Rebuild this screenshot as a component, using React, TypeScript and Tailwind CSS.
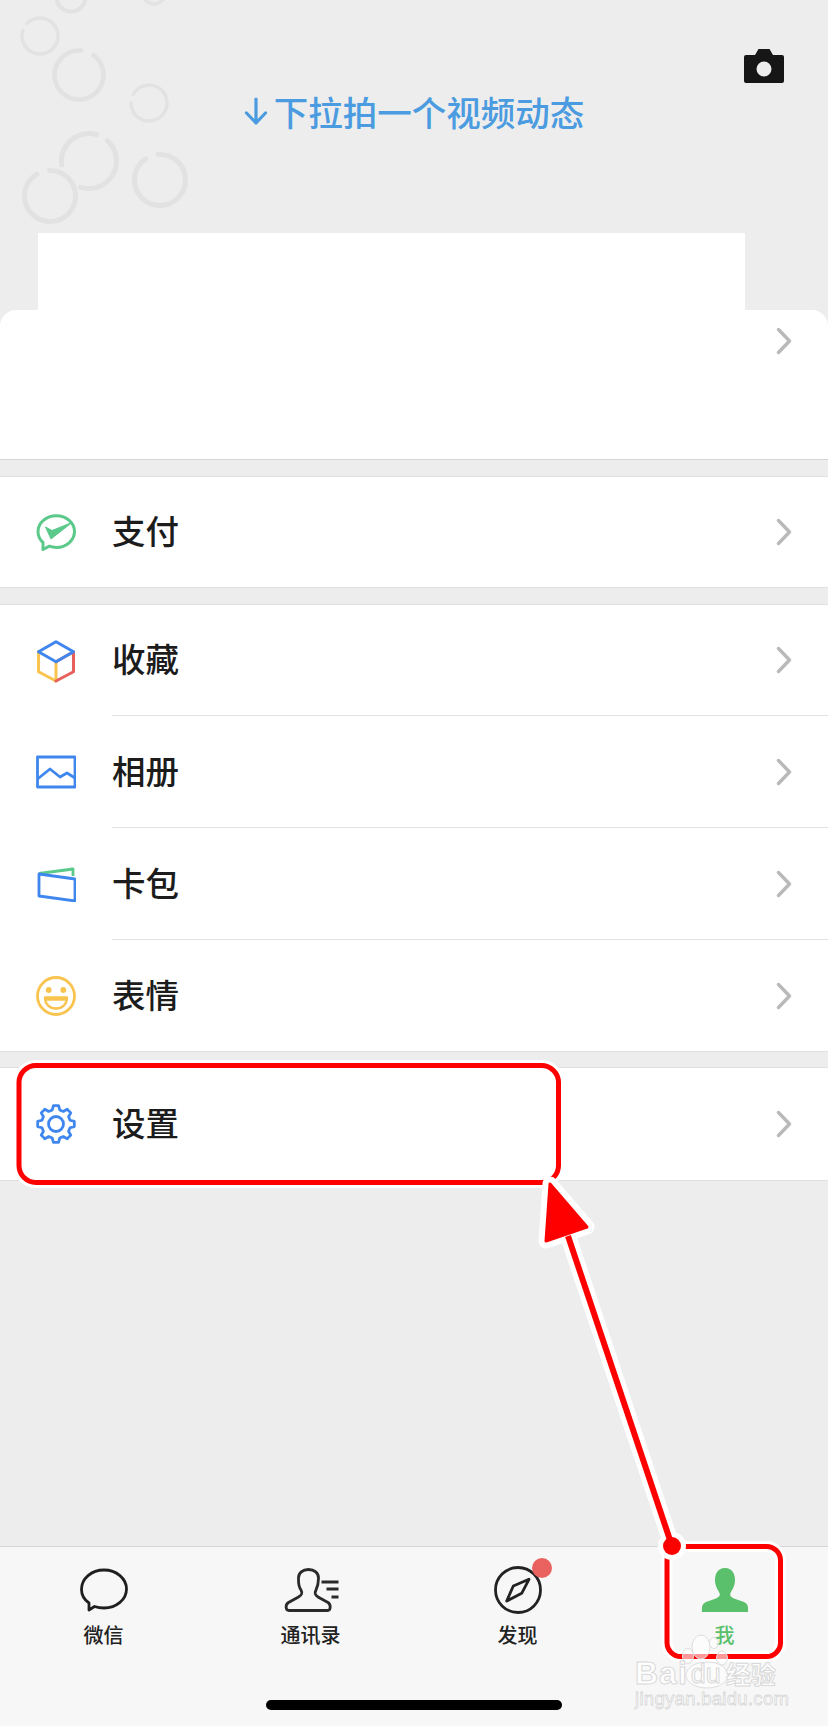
import React from "react";

const cjk = "font-['Noto_Sans_CJK_SC','Noto_Sans',sans-serif]";

function Chevron() {
  return (
    <svg width="18" height="30" viewBox="0 0 18 30" fill="none" className="shrink-0">
      <path d="M3.500 3.500 L14.500 15 L3.500 26.500" stroke="#b9b9b9" strokeWidth="3.400" strokeLinecap="round" strokeLinejoin="round" />
    </svg>
  );
}

function PayIcon() {
  return (
    <svg width="40" height="40" viewBox="0 0 40 40" fill="none">
      <path d="M7 30.500 C3.500 27.500 2 24 2 19.600 C2 10.800 10.200 3.800 20.300 3.800 C30.400 3.800 38.500 10.800 38.500 19.600 C38.500 28.400 30.400 35.400 20.300 35.400 C17.800 35.400 15.500 35 13.400 34.200 L7 37.500 Z" stroke="#5ac98a" strokeWidth="3" strokeLinejoin="round" />
      <path d="M9.500 15 L16 18.500 L36 10.500 L15 27 Z" fill="#5ac98a" stroke="#5ac98a" strokeWidth="1" strokeLinejoin="round" />
    </svg>
  );
}

function BoxIcon() {
  return (
    <svg width="40" height="44" viewBox="0 0 40 44" fill="none" strokeWidth="3" strokeLinejoin="round" strokeLinecap="round">
      <path d="M2.500 32.700 L2.500 12.700 M2.500 32.700 L20 42 L20 22.700" stroke="#f8c44f" />
      <path d="M37.500 12.700 L37.500 32.700 L20 42 M37.500 12.700 L20 22.700" stroke="#e8605c" />
      <path d="M2.500 12.700 L20 2.700 L37.500 12.700 L20 22.700 Z" stroke="#3f87ee" />
    </svg>
  );
}

function AlbumIcon() {
  return (
    <svg width="40" height="34" viewBox="0 0 40 34" fill="none" stroke="#3f87ee" strokeWidth="2.800" strokeLinejoin="round">
      <rect x="1.500" y="2" width="37.500" height="30" />
      <path d="M1.500 24 L14 14 L24 22 L31 18 L39 23" />
    </svg>
  );
}

function CardIcon() {
  return (
    <svg width="40" height="36" viewBox="0 0 40 36" fill="none" strokeWidth="2.800" strokeLinejoin="round">
      <path d="M3 7.500 L37 3 L37 10" stroke="#5ac98a" />
      <path d="M3 8 L39 13 L39 35 L3 30 Z" stroke="#3f87ee" />
    </svg>
  );
}

function SmileIcon() {
  return (
    <svg width="40" height="40" viewBox="0 0 40 40" fill="none">
      <circle cx="20" cy="20" r="18.500" stroke="#f8c44f" strokeWidth="2.800" />
      <circle cx="12.700" cy="14" r="2.900" fill="#f8c44f" />
      <circle cx="27.300" cy="14" r="2.900" fill="#f8c44f" />
      <path d="M9 21.500 H31 C31 28.500 26 32.500 20 32.500 C14 32.500 9 28.500 9 21.500 Z M9.500 23.500 H30.500" stroke="#f8c44f" strokeWidth="2.400" strokeLinejoin="round" />
    </svg>
  );
}

function gearPath() {
  const pts: string[] = [];
  for (let i = 0; i < 8; i++) {
    const a = (i * 45 * Math.PI) / 180;
    const steps: [number, number][] = [
      [-15, 14.5],
      [-8, 18.5],
      [8, 18.5],
      [15, 14.5],
    ];
    for (const [off, r] of steps) {
      const t = a + (off * Math.PI) / 180;
      pts.push(`${(20 + r * Math.sin(t)).toFixed(2)} ${(20 - r * Math.cos(t)).toFixed(2)}`);
    }
  }
  return "M" + pts.join(" L") + " Z";
}

function GearIcon() {
  return (
    <svg width="40" height="40" viewBox="0 0 40 40" fill="none" stroke="#3f87ee" strokeWidth="2.800" strokeLinejoin="round">
      <circle cx="20" cy="20" r="7.500" />
      <path d={gearPath()} />
    </svg>
  );
}

function ChatIcon() {
  return (
    <svg width="48" height="44" viewBox="0 0 48 44" fill="none">
      <path d="M9 35 C4 31.500 1.500 27 1.500 21.500 C1.500 10.500 11.500 2 24 2 C36.500 2 46.500 10.500 46.500 21 C46.500 31.500 36.500 40 24 40 C20.500 40 17.500 39.500 14.500 38.500 L9 42 Z" stroke="#1f1f1f" strokeWidth="2.800" strokeLinejoin="round" />
    </svg>
  );
}

function ContactsIcon() {
  return (
    <svg width="56" height="44" viewBox="0 0 56 44" fill="none" stroke="#2a2a2a" strokeWidth="2.800" strokeLinejoin="round">
      <path d="M18 22 C15 18 15.500 13 15.500 10 C15.500 5 19.500 1.500 25.500 1.500 C31.500 1.500 35.500 5 35.500 10 C35.500 13 35 18 33 22 C31.500 25 31.500 27 35 29 L45 34.500 C48 36.500 48 42.500 44.500 42.500 H6 C2.500 42.500 2 36.500 5.500 34.500 L15.500 29 C19.500 27 19.500 25 18 22 Z" />
      <path d="M38.500 14 H55.500 M43.500 21 H55.500 M48.500 29 H55.500" strokeWidth="3" />
    </svg>
  );
}

function CompassIcon() {
  return (
    <svg width="48" height="48" viewBox="0 0 48 48" fill="none">
      <circle cx="24" cy="24" r="22.500" stroke="#222" strokeWidth="2.800" />
      <path d="M35 13.300 L27.700 27.300 L12.700 35 L19.300 20 Z" stroke="#222" strokeWidth="2.800" strokeLinejoin="round" />
    </svg>
  );
}

function MeIcon() {
  return (
    <svg width="48" height="44" viewBox="0 0 48 44" fill="#5ac06c">
      <path d="M24 0 C32 0 34 7 34 12 C34 18 31 22 29.500 25 C28.500 27.500 30 29 33 30.500 L43 34 C46.500 35.500 47.500 38.500 47 44 H1 C0.500 38.500 1.500 35.500 5 34 L15 30.500 C18 29 19.500 27.500 18.500 25 C17 22 14 18 14 12 C14 7 16 0 24 0 Z" />
    </svg>
  );
}

function MenuRow({ icon, label, divider = false, h = "h-[112px]" }: { icon: React.ReactNode; label: string; divider?: boolean; h?: string }) {
  return (
    <div className={`flex items-stretch ${h}`}>
      <div className="w-[112px] shrink-0 flex items-center">
        <div className="w-[40px] ml-[36px] flex items-center justify-center">{icon}</div>
      </div>
      <div className={`flex-1 flex items-center justify-between pr-[35px] ${divider ? "border-b border-[#e3e3e3]" : ""}`}>
        <span className="mb-[4px] text-[33.500px] leading-none font-medium text-[#1c1c1c]">{label}</span>
        <Chevron />
      </div>
    </div>
  );
}

function Tab({ icon, label, active = false }: { icon: React.ReactNode; label: string; active?: boolean }) {
  return (
    <div className="flex flex-col items-center">
      <div className="h-[48px] flex items-center justify-center relative">{icon}</div>
      <span className={`mt-[7px] text-[20px] leading-[28px] font-medium ${active ? "text-[#5ac06c]" : "text-[#222222]"}`}>{label}</span>
    </div>
  );
}

function Arc({ cx, cy, r, start, sweep, w }: { cx: number; cy: number; r: number; start: number; sweep: number; w: number }) {
  return (
    <circle
      cx={cx}
      cy={cy}
      r={r}
      pathLength={360}
      strokeWidth={w}
      strokeDasharray={`${sweep} ${360 - sweep}`}
      transform={`rotate(${start} ${cx} ${cy})`}
    />
  );
}

function Bubbles() {
  return (
    <svg width="200" height="230" viewBox="0 0 200 230" fill="none" className="absolute left-0 top-0" stroke="#e2e2e2" strokeLinecap="round">
      <circle cx="71" cy="-3" r="14.500" strokeWidth="4" />
      <circle cx="154" cy="-7" r="11" strokeWidth="3.500" />
      <Arc cx={40} cy={36} r={18} start={-135} sweep={333} w={3.5} />
      <Arc cx={79} cy={75} r={24.5} start={-54} sweep={329} w={4.6} />
      <Arc cx={149} cy={103} r={18} start={-151} sweep={331} w={3.5} />
      <Arc cx={89} cy={161} r={27.5} start={-48} sweep={156} w={5} />
      <Arc cx={89} cy={161} r={27.5} start={172} sweep={114} w={5} />
      <Arc cx={50} cy={196} r={25.5} start={-91} sweep={330} w={5} />
      <Arc cx={160} cy={180} r={25.5} start={-94} sweep={330} w={5} />
    </svg>
  );
}

function Annotations() {
  return (
    <svg width="828" height="1726" viewBox="0 0 828 1726" fill="none" className="absolute left-0 top-0 pointer-events-none">
      <rect x="19" y="1065.500" width="539.500" height="117" rx="17" stroke="#fff" strokeWidth="11" />
      <rect x="667" y="1546.500" width="113.500" height="110" rx="14" stroke="#fff" strokeWidth="11" />
      <rect x="19" y="1065.500" width="539.500" height="117" rx="17" stroke="#f00" strokeWidth="5" />
      <rect x="667" y="1546.500" width="113.500" height="110" rx="14" stroke="#f00" strokeWidth="5" />
      <path d="M672 1546 L568 1236" stroke="#fff" strokeWidth="16" />
      <path d="M550 1184 L587 1227 L546 1241 Z" fill="#fff" stroke="#fff" strokeWidth="15" strokeLinejoin="round" />
      <circle cx="672" cy="1546" r="14" fill="#fff" />
      <path d="M672 1546 L568 1236" stroke="#f00" strokeWidth="6" />
      <path d="M550 1184 L587 1227 L546 1241 Z" fill="#f00" stroke="#f00" strokeWidth="3" strokeLinejoin="round" />
      <circle cx="672" cy="1546" r="9" fill="#f00" />
    </svg>
  );
}

function Watermark() {
  const outline = "text-[#ffffff] [-webkit-text-stroke:1px_#d8d8d8]";
  return (
    <div className="absolute left-[625px] top-[1630px] w-[170px] h-[90px] pointer-events-none">
      <svg width="170" height="70" viewBox="0 0 170 70" className="absolute left-0 top-0" fill="#ffffff" fillOpacity="0.6" stroke="#dedede">
        <ellipse cx="76" cy="17" rx="9" ry="12" />
        <ellipse cx="63" cy="26" rx="5.500" ry="7.500" />
        <ellipse cx="89" cy="13" rx="4.500" ry="5.500" />
        <ellipse cx="97" cy="28" rx="5.500" ry="7" />
        <ellipse cx="82" cy="45" rx="21" ry="13" />
      </svg>
      <div className="absolute left-[10px] top-[28px] h-[30px] flex items-center whitespace-nowrap leading-none">
        <span className={`font-['Liberation_Sans',sans-serif] font-bold text-[32px] tracking-[1px] ${outline}`}>Bai</span>
        <span className={`font-['Liberation_Sans',sans-serif] text-[27px] ml-[3px] mt-[2px] ${outline}`}>du</span>
        <span className={`${cjk} font-bold text-[25px] ml-[5px] ${outline}`}>经验</span>
      </div>
      <div className={`absolute left-[10px] top-[59px] font-['Liberation_Sans',sans-serif] text-[18.500px] leading-[20px] tracking-[0.3px] whitespace-nowrap text-[#fdfdfd] [-webkit-text-stroke:0.8px_#d8d8d8]`}>
        jingyan.baidu.com
      </div>
    </div>
  );
}

export default function App() {
  return (
    <div className={`relative w-[828px] h-[1726px] overflow-hidden bg-[#ededed] flex flex-col ${cjk}`}>
      <header className="relative h-[310px] shrink-0 flex flex-col">
        <Bubbles />
        <div className="relative flex justify-end pt-[49px] pr-[44px] h-[87px]">
          <svg width="40" height="34" viewBox="0 0 40 34" fill="#161616">
            <path d="M2 6 H11 L14.500 0 H25.500 L29 6 H38 Q40 6 40 8 V32 Q40 34 38 34 H2 Q0 34 0 32 V8 Q0 6 2 6 Z M20 12.500 A7.500 7.500 0 1 0 20 27.500 A7.500 7.500 0 1 0 20 12.500 Z" fillRule="evenodd" />
          </svg>
        </div>
        <div className="relative flex items-center justify-center gap-[6px] text-[#4a9be0] mt-[1px]">
          <svg width="24" height="30" viewBox="0 0 24 30" fill="none" stroke="#4a9be0" strokeWidth="3.200" strokeLinecap="round" strokeLinejoin="round">
            <path d="M12 3 V27 M2.500 17 L12 27 L21.500 17" />
          </svg>
          <span className="text-[34.500px] leading-[46px] font-medium">下拉拍一个视频动态</span>
        </div>
        <div className="mt-auto ml-[38px] w-[707px] h-[77px] bg-white" />
      </header>

      <section className="h-[150px] shrink-0 bg-white rounded-t-[16px] border-b border-[#d4d4d4] flex justify-end pt-[16px] pr-[35px]">
        <Chevron />
      </section>

      <section className="mt-[16px] shrink-0 bg-white border-y border-[#e0e0e0]">
        <MenuRow icon={<PayIcon />} label="支付" h="h-[110px]" />
      </section>

      <section className="mt-[16px] shrink-0 bg-white border-y border-[#e0e0e0]">
        <MenuRow icon={<BoxIcon />} label="收藏" divider h="h-[111px]" />
        <MenuRow icon={<AlbumIcon />} label="相册" divider />
        <MenuRow icon={<CardIcon />} label="卡包" divider />
        <MenuRow icon={<SmileIcon />} label="表情" h="h-[111px]" />
      </section>

      <section className="mt-[15px] shrink-0 bg-white border-y border-[#e0e0e0]">
        <MenuRow icon={<GearIcon />} label="设置" />
      </section>

      <footer className="mt-auto h-[180px] shrink-0 bg-[#f7f7f7] border-t border-[#d6d6d6] flex flex-col">
        <div className="grid grid-cols-4 pt-[19px]">
          <Tab icon={<ChatIcon />} label="微信" />
          <Tab icon={<ContactsIcon />} label="通讯录" />
          <Tab
            label="发现"
            icon={
              <>
                <CompassIcon />
                <span className="absolute left-[38px] top-[-8px] w-[20px] h-[20px] rounded-full bg-[#ea6260]" />
              </>
            }
          />
          <Tab icon={<MeIcon />} label="我" active />
        </div>
        <div className="mt-auto mb-[16px] mx-auto w-[296px] h-[10px] rounded-full bg-black" />
      </footer>

      <Annotations />
      <Watermark />
    </div>
  );
}
